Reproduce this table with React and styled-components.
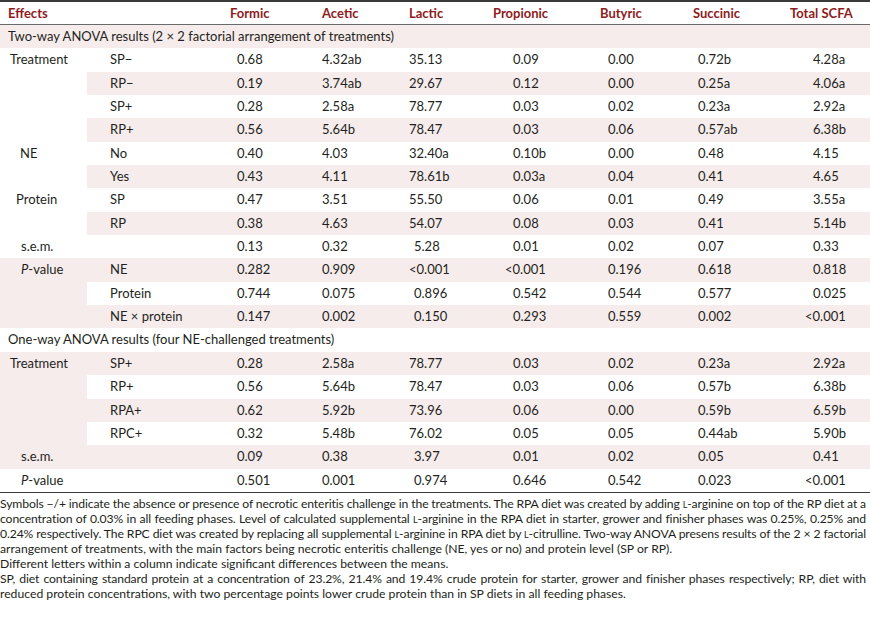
import React from "react";
import styled, { createGlobalStyle } from "styled-components";

const GlobalStyle = createGlobalStyle`
  html, body {
    margin: 0;
    padding: 0;
    background: #ffffff;
  }
  body {
    font-family: "Lato", "Liberation Sans", sans-serif;
    color: #231f20;
  }
`;

const PINK = "#f7ecec";

// column set-up: x of the value text and x of the header text
const columns = [
  { key: "formic", title: "Formic", width: 85, pad: 7, hpad: 0 },
  { key: "acetic", title: "Acetic", width: 85, pad: 7, hpad: 7 },
  { key: "lactic", title: "Lactic", width: 90, pad: 14, hpad: 9 },
  { key: "propionic", title: "Propionic", width: 100, pad: 23, hpad: 3 },
  { key: "butyric", title: "Butyric", width: 95, pad: 18, hpad: 10 },
  { key: "succinic", title: "Succinic", width: 100, pad: 13, hpad: 8 },
  { key: "total", title: "Total SCFA", width: 85, pad: 28, hpad: 5 },
];

const P = () => (
  <>
    <i>P</i>-value
  </>
);

const sections = [
  { title: "Two-way ANOVA results (2 × 2 factorial arrangement of treatments)" },
  {
    label: "Treatment",
    indent: 10,
    rows: [
      ["SP−", "0.68", "4.32ab", "35.13", "0.09", "0.00", "0.72b", "4.28a"],
      ["RP−", "0.19", "3.74ab", "29.67", "0.12", "0.00", "0.25a", "4.06a"],
      ["SP+", "0.28", "2.58a", "78.77", "0.03", "0.02", "0.23a", "2.92a"],
      ["RP+", "0.56", "5.64b", "78.47", "0.03", "0.06", "0.57ab", "6.38b"],
    ],
  },
  {
    label: "NE",
    indent: 20,
    rows: [
      ["No", "0.40", "4.03", "32.40a", "0.10b", "0.00", "0.48", "4.15"],
      ["Yes", "0.43", "4.11", "78.61b", "0.03a", "0.04", "0.41", "4.65"],
    ],
  },
  {
    label: "Protein",
    indent: 16,
    rows: [
      ["SP", "0.47", "3.51", "55.50", "0.06", "0.01", "0.49", "3.55a"],
      ["RP", "0.38", "4.63", "54.07", "0.08", "0.03", "0.41", "5.14b"],
    ],
  },
  {
    label: "s.e.m.",
    indent: 21,
    rows: [["", "0.13", "0.32", "5.28", "0.01", "0.02", "0.07", "0.33"]],
  },
  {
    label: <P />,
    indent: 21,
    rows: [
      ["NE", "0.282", "0.909", "<0.001", "<0.001", "0.196", "0.618", "0.818"],
      ["Protein", "0.744", "0.075", "0.896", "0.542", "0.544", "0.577", "0.025"],
      ["NE × protein", "0.147", "0.002", "0.150", "0.293", "0.559", "0.002", "<0.001"],
    ],
  },
  { title: "One-way ANOVA results (four NE-challenged treatments)" },
  {
    label: "Treatment",
    indent: 10,
    rows: [
      ["SP+", "0.28", "2.58a", "78.77", "0.03", "0.02", "0.23a", "2.92a"],
      ["RP+", "0.56", "5.64b", "78.47", "0.03", "0.06", "0.57b", "6.38b"],
      ["RPA+", "0.62", "5.92b", "73.96", "0.06", "0.00", "0.59b", "6.59b"],
      ["RPC+", "0.32", "5.48b", "76.02", "0.05", "0.05", "0.44ab", "5.90b"],
    ],
  },
  {
    label: "s.e.m.",
    indent: 21,
    rows: [["", "0.09", "0.38", "3.97", "0.01", "0.02", "0.05", "0.41"]],
  },
  {
    label: <P />,
    indent: 21,
    rows: [["", "0.501", "0.001", "0.974", "0.646", "0.542", "0.023", "<0.001"]],
  },
];

// small nudges so the numbers sit as in the printed table
const shiftOf = (key, v) => {
  if (key === "lactic") {
    if (v.startsWith("<") || parseFloat(v) >= 10) return -5;
    return 0;
  }
  if (v.startsWith("<")) return -8;
  return 0;
};

const Page = styled.div`
  width: 870px;
`;

const Table = styled.table`
  width: 870px;
  border-collapse: collapse;
  table-layout: fixed;

  tbody tr:last-child td {
    border-bottom: 1px solid #3a3a3a;
  }
`;

const HeadCell = styled.th`
  height: 22px;
  padding: 0 0 0 ${(p) => p.$pad}px;
  border-top: 2px solid #3a3a3a;
  border-bottom: 1px solid #6a6a6a;
  color: #8d1c20;
  font-size: 13px;
  font-weight: 700;
  text-align: left;
  white-space: nowrap;
  vertical-align: middle;
`;

const Cell = styled.td`
  height: 23.35px;
  padding: 0 0 0 ${(p) => p.$pad}px;
  background: ${(p) => (p.$shade ? PINK : "#ffffff")};
  font-size: 13px;
  line-height: 23px;
  text-align: left;
  vertical-align: top;
  white-space: nowrap;
`;

const Val = styled.span`
  display: inline-block;
  margin-left: ${(p) => p.$shift}px;
`;

const Notes = styled.div`
  width: 866px;
  padding-top: 3px;
  font-size: 12.2px;
  line-height: 15px;
`;

// full lines are set tight and then spread to the right edge, as in print
const Line = styled.div`
  text-align: ${(p) => (p.$justify ? "justify" : "left")};
  text-align-last: ${(p) => (p.$justify ? "justify" : "left")};
  letter-spacing: ${(p) => (p.$justify ? "-0.12px" : "0")};
  word-spacing: ${(p) => (p.$justify ? "-1.6px" : "0")};
`;

const Sc = styled.span`
  font-variant: small-caps;
`;

const Arg = () => (
  <>
    <Sc>l</Sc>-arginine
  </>
);

function Body() {
  const out = [];
  let i = 1;
  sections.forEach((s, si) => {
    if (s.title) {
      out.push(
        <tr key={`t${si}`}>
          <Cell colSpan={9} $pad={8} $shade={i % 2 === 1}>
            {s.title}
          </Cell>
        </tr>
      );
      i += 1;
      return;
    }
    const first = i;
    s.rows.forEach((r, ri) => {
      const shade = i % 2 === 1;
      out.push(
        <tr key={`r${si}-${ri}`}>
          {ri === 0 && (
            <Cell rowSpan={s.rows.length} $pad={s.indent} $shade={first % 2 === 1}>
              {s.label}
            </Cell>
          )}
          <Cell $pad={23} $shade={shade}>
            {r[0]}
          </Cell>
          {columns.map((c, ci) => (
            <Cell key={c.key} $pad={c.pad} $shade={shade}>
              <Val $shift={shiftOf(c.key, r[ci + 1])}>{r[ci + 1]}</Val>
            </Cell>
          ))}
        </tr>
      );
      i += 1;
    });
  });
  return <tbody>{out}</tbody>;
}

export default function App() {
  return (
    <Page>
      <GlobalStyle />
      <Table>
        <colgroup>
          <col style={{ width: 87 }} />
          <col style={{ width: 143 }} />
          {columns.map((c) => (
            <col key={c.key} style={{ width: c.width }} />
          ))}
        </colgroup>
        <thead>
          <tr>
            <HeadCell $pad={8}>Effects</HeadCell>
            <HeadCell $pad={0} />
            {columns.map((c) => (
              <HeadCell key={c.key} $pad={c.hpad}>
                {c.title}
              </HeadCell>
            ))}
          </tr>
        </thead>
        <Body />
      </Table>
      <Notes>
        <Line $justify>
          Symbols −/+ indicate the absence or presence of necrotic enteritis challenge in the
          treatments. The RPA diet was created by adding <Arg /> on top of the RP diet at a
        </Line>
        <Line $justify>
          concentration of 0.03% in all feeding phases. Level of calculated supplemental <Arg /> in
          the RPA diet in starter, grower and finisher phases was 0.25%, 0.25% and
        </Line>
        <Line $justify>
          0.24% respectively. The RPC diet was created by replacing all supplemental <Arg /> in RPA
          diet by <Sc>l</Sc>-citrulline. Two-way ANOVA presens results of the 2 × 2 factorial
        </Line>
        <Line>
          arrangement of treatments, with the main factors being necrotic enteritis challenge (NE,
          yes or no) and protein level (SP or RP).
        </Line>
        <Line>Different letters within a column indicate significant differences between the means.</Line>
        <Line $justify>
          SP, diet containing standard protein at a concentration of 23.2%, 21.4% and 19.4% crude
          protein for starter, grower and finisher phases respectively; RP, diet with
        </Line>
        <Line>
          reduced protein concentrations, with two percentage points lower crude protein than in SP
          diets in all feeding phases.
        </Line>
      </Notes>
    </Page>
  );
}
